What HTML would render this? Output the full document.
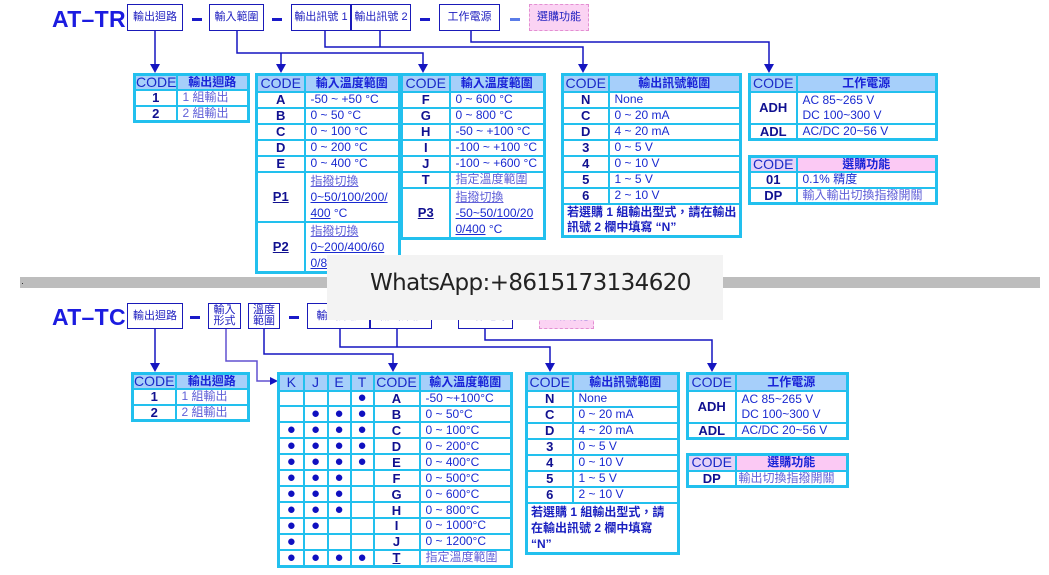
<!DOCTYPE html>
<html><head><meta charset="utf-8">
<style>
*{margin:0;padding:0;box-sizing:border-box}
body{width:1049px;height:575px;background:#fff;position:relative;overflow:hidden;font-family:"Liberation Sans","Noto Sans CJK TC",sans-serif;color:#1a22c8}
.abs{position:absolute}
.title{position:absolute;font-size:23px;font-weight:bold;color:#1c1ce0;letter-spacing:0.3px}
.hb{position:absolute;border:1px solid #1a1ab8;font-size:11px;color:#2020c0;display:flex;align-items:center;justify-content:center;text-align:center;line-height:11px;background:#fff}
.pk{background:#fbd3f3;border:1px dashed #e38fd2}
.dash{position:absolute;height:3px;width:10px;background:#1a1ac8}
table.t{position:absolute;border-collapse:collapse;table-layout:fixed;border:3px solid #22c0ee;background:#fff}
table.t td{border:2px solid #22c0ee;padding:0 0 0 5px;font-size:12px;line-height:13px;color:#1a2ad0;white-space:nowrap;overflow:hidden;vertical-align:middle}
table.t td.c{text-align:center;padding:0;font-size:13px;font-weight:bold;color:#101090}
table.t tr.h td{background:#a6cffa;text-align:center;padding:0;font-weight:bold;font-size:12px;color:#1a24d8}
table.t tr.h td.cd{font-weight:normal;font-size:14px;color:#1a2ac8}
table.t td.p{color:#6060d8}
.u{text-decoration:underline}
table.t td.d{text-align:center;padding:0;font-size:15px;line-height:12px;color:#1010c0}
</style></head><body>

<svg class="abs" style="left:0;top:0" width="1049" height="575">
<g stroke="#1515c0" stroke-width="1.5" fill="none">
<polyline points="155,31 155,66"/>
<polyline points="237,31 237,53 423,53 423,66"/>
<polyline points="281,53 281,66"/>
<polyline points="325,31 325,47 583,47 583,66"/>
<polyline points="380,31 380,47"/>
<polyline points="471,31 471,42 769,42 769,66"/>
<polyline points="155,329 155,365"/>
<polyline points="226,329 226,361 257,361 257,381 272,381" stroke="#6050d0"/>
<polyline points="264,329 264,354 393,354 393,365"/>
<polyline points="340,329 340,347 550,347 550,365"/>
<polyline points="397,329 397,347"/>
<polyline points="485,329 485,340 712,340 712,365"/>
</g>
<g fill="#1515c0">
<polygon points="150,64 160,64 155,73"/>
<polygon points="276,64 286,64 281,73"/>
<polygon points="418,64 428,64 423,73"/>
<polygon points="578,64 588,64 583,73"/>
<polygon points="764,64 774,64 769,73"/>
<polygon points="150,363 160,363 155,372"/>
<polygon points="388,363 398,363 393,372"/>
<polygon points="545,363 555,363 550,372"/>
<polygon points="707,363 717,363 712,372"/>
<polygon points="270,377 270,385 278,381"/>
</g>
</svg>

<div class="title" style="left:52px;top:6px">AT–TR</div>
<div class="hb" style="left:127px;top:4px;width:56px;height:27px">輸出迴路</div>
<div class="dash" style="left:192px;top:18px"></div>
<div class="hb" style="left:209px;top:4px;width:55px;height:27px">輸入範圍</div>
<div class="dash" style="left:272px;top:18px"></div>
<div class="hb" style="left:291px;top:4px;width:60px;height:27px">輸出訊號 1</div>
<div class="hb" style="left:351px;top:4px;width:60px;height:27px">輸出訊號 2</div>
<div class="dash" style="left:420px;top:18px"></div>
<div class="hb" style="left:439px;top:4px;width:61px;height:27px">工作電源</div>
<div class="dash" style="left:510px;top:18px;background:#5a7ce8"></div>
<div class="hb pk" style="left:529px;top:4px;width:60px;height:27px">選購功能</div>

<table class="t" style="left:133px;top:73px;width:117px;height:50px">
<col style="width:42px"><col>
<tr class="h"><td class="cd">CODE</td><td>輸出迴路</td></tr>
<tr><td class="c">1</td><td class="p">1 組輸出</td></tr>
<tr><td class="c">2</td><td class="p">2 組輸出</td></tr>
</table>

<table class="t" style="left:255px;top:73px;width:146px;height:197px">
<col style="width:48px"><col>
<tr class="h" style="height:17px"><td class="cd">CODE</td><td>輸入溫度範圍</td></tr>
<tr style="height:16px"><td class="c">A</td><td>-50 ~ +50 °C</td></tr>
<tr style="height:16px"><td class="c">B</td><td>0 ~ 50 °C</td></tr>
<tr style="height:16px"><td class="c">C</td><td>0 ~ 100 °C</td></tr>
<tr style="height:16px"><td class="c">D</td><td>0 ~ 200 °C</td></tr>
<tr style="height:16px"><td class="c">E</td><td>0 ~ 400 °C</td></tr>
<tr style="height:48px"><td class="c u">P1</td><td class="p" style="line-height:16px"><span class="u">指撥切換 </span><br><span class="u" style="color:#1a2ad0">0~50/100/200/</span><br><span style="color:#1a2ad0"><span class="u">400</span> °C</span></td></tr>
<tr style="height:50px"><td class="c u">P2</td><td class="p" style="line-height:16px"><span class="u">指撥切換 </span><br><span class="u" style="color:#1a2ad0">0~200/400/60</span><br><span class="u" style="color:#1a2ad0">0/800</span></td></tr>
</table>

<table class="t" style="left:400px;top:73px;width:146px;height:164px">
<col style="width:48px"><col>
<tr class="h" style="height:17px"><td class="cd">CODE</td><td>輸入溫度範圍</td></tr>
<tr style="height:16px"><td class="c">F</td><td>0 ~ 600 °C</td></tr>
<tr style="height:16px"><td class="c">G</td><td>0 ~ 800 °C</td></tr>
<tr style="height:16px"><td class="c">H</td><td>-50 ~ +100 °C</td></tr>
<tr style="height:16px"><td class="c">I</td><td>-100 ~ +100 °C</td></tr>
<tr style="height:16px"><td class="c">J</td><td>-100 ~ +600 °C</td></tr>
<tr style="height:16px"><td class="c">T</td><td class="p">指定溫度範圍</td></tr>
<tr style="height:49px"><td class="c u">P3</td><td class="p" style="line-height:16px"><span class="u">指撥切換 </span><br><span class="u" style="color:#1a2ad0">-50~50/100/20</span><br><span style="color:#1a2ad0"><span class="u">0/400</span> °C</span></td></tr>
</table>

<table class="t" style="left:561px;top:73px;width:181px;height:164px">
<col style="width:46px"><col>
<tr class="h" style="height:17px"><td class="cd">CODE</td><td>輸出訊號範圍</td></tr>
<tr style="height:16px"><td class="c">N</td><td>None</td></tr>
<tr style="height:16px"><td class="c">C</td><td>0 ~ 20 mA</td></tr>
<tr style="height:16px"><td class="c">D</td><td>4 ~ 20 mA</td></tr>
<tr style="height:16px"><td class="c">3</td><td>0 ~ 5 V</td></tr>
<tr style="height:16px"><td class="c">4</td><td>0 ~ 10 V</td></tr>
<tr style="height:16px"><td class="c">5</td><td>1 ~ 5 V</td></tr>
<tr style="height:16px"><td class="c">6</td><td>2 ~ 10 V</td></tr>
<tr style="height:32px"><td colspan="2" style="font-weight:bold;font-size:12px;line-height:15px;padding-left:3px;color:#1a20c0">若選購 1 組輸出型式，請在輸出<br>訊號 2 欄中填寫 “N”</td></tr>
</table>

<table class="t" style="left:748px;top:73px;width:190px;height:66px">
<col style="width:47px"><col>
<tr class="h" style="height:17px"><td class="cd">CODE</td><td>工作電源</td></tr>
<tr style="height:32px"><td class="c">ADH</td><td style="line-height:15px">AC 85~265 V<br>DC 100~300 V</td></tr>
<tr style="height:16px"><td class="c">ADL</td><td>AC/DC 20~56 V</td></tr>
</table>

<table class="t" style="left:748px;top:155px;width:190px;height:50px">
<col style="width:47px"><col>
<tr class="h"><td class="cd" style="background:#e4d2f8">CODE</td><td style="background:#fbc9f4">選購功能</td></tr>
<tr><td class="c">01</td><td>0.1% <span class="p">精度</span></td></tr>
<tr><td class="c">DP</td><td class="p">輸入輸出切換指撥開關</td></tr>
</table>

<div class="abs" style="left:20px;top:277px;width:1020px;height:11px;background:#bdbdbd"></div>
<div class="abs" style="left:22px;top:283px;width:1px;height:1px;background:#333"></div>

<div class="title" style="left:52px;top:304px">AT–TC</div>
<div class="hb" style="left:127px;top:303px;width:56px;height:26px">輸出迴路</div>
<div class="dash" style="left:190px;top:316px"></div>
<div class="hb" style="left:208px;top:303px;width:33px;height:26px">輸入<br>形式</div>
<div class="hb" style="left:248px;top:303px;width:32px;height:26px">溫度<br>範圍</div>
<div class="dash" style="left:289px;top:316px"></div>
<div class="hb" style="left:307px;top:303px;width:63px;height:26px">輸出訊號</div>
<div class="hb" style="left:370px;top:303px;width:62px;height:26px">輸出訊號</div>
<div class="dash" style="left:440px;top:316px;background:#c8d0f0"></div>
<div class="hb" style="left:458px;top:303px;width:55px;height:26px">工作電源</div>
<div class="dash" style="left:522px;top:316px;background:#c8d0f0"></div>
<div class="hb pk" style="left:539px;top:303px;width:55px;height:26px">選購功能</div>

<table class="t" style="left:131px;top:372px;width:119px;height:50px">
<col style="width:43px"><col>
<tr class="h"><td class="cd">CODE</td><td>輸出迴路</td></tr>
<tr><td class="c">1</td><td class="p">1 組輸出</td></tr>
<tr><td class="c">2</td><td class="p">2 組輸出</td></tr>
</table>

<table class="t" style="left:277px;top:372px;width:236px;height:196px">
<col style="width:25px"><col style="width:24px"><col style="width:23px"><col style="width:23px"><col style="width:46px"><col>
<tr class="h" style="height:17px"><td class="cd">K</td><td class="cd">J</td><td class="cd">E</td><td class="cd">T</td><td class="cd">CODE</td><td>輸入溫度範圍</td></tr>
<tr><td class="d"></td><td class="d"></td><td class="d"></td><td class="d">●</td><td class="c">A</td><td>-50 ~+100°C</td></tr>
<tr><td class="d"></td><td class="d">●</td><td class="d">●</td><td class="d">●</td><td class="c">B</td><td>0 ~ 50°C</td></tr>
<tr><td class="d">●</td><td class="d">●</td><td class="d">●</td><td class="d">●</td><td class="c">C</td><td>0 ~ 100°C</td></tr>
<tr><td class="d">●</td><td class="d">●</td><td class="d">●</td><td class="d">●</td><td class="c">D</td><td>0 ~ 200°C</td></tr>
<tr><td class="d">●</td><td class="d">●</td><td class="d">●</td><td class="d">●</td><td class="c">E</td><td>0 ~ 400°C</td></tr>
<tr><td class="d">●</td><td class="d">●</td><td class="d">●</td><td class="d"></td><td class="c">F</td><td>0 ~ 500°C</td></tr>
<tr><td class="d">●</td><td class="d">●</td><td class="d">●</td><td class="d"></td><td class="c">G</td><td>0 ~ 600°C</td></tr>
<tr><td class="d">●</td><td class="d">●</td><td class="d">●</td><td class="d"></td><td class="c">H</td><td>0 ~ 800°C</td></tr>
<tr><td class="d">●</td><td class="d">●</td><td class="d"></td><td class="d"></td><td class="c">I</td><td>0 ~ 1000°C</td></tr>
<tr><td class="d">●</td><td class="d"></td><td class="d"></td><td class="d"></td><td class="c">J</td><td>0 ~ 1200°C</td></tr>
<tr><td class="d">●</td><td class="d">●</td><td class="d">●</td><td class="d">●</td><td class="c u">T</td><td class="p">指定溫度範圍</td></tr>
</table>

<table class="t" style="left:525px;top:372px;width:155px;height:180px">
<col style="width:46px"><col>
<tr class="h" style="height:17px"><td class="cd">CODE</td><td>輸出訊號範圍</td></tr>
<tr style="height:16px"><td class="c">N</td><td>None</td></tr>
<tr style="height:16px"><td class="c">C</td><td>0 ~ 20 mA</td></tr>
<tr style="height:16px"><td class="c">D</td><td>4 ~ 20 mA</td></tr>
<tr style="height:16px"><td class="c">3</td><td>0 ~ 5 V</td></tr>
<tr style="height:16px"><td class="c">4</td><td>0 ~ 10 V</td></tr>
<tr style="height:16px"><td class="c">5</td><td>1 ~ 5 V</td></tr>
<tr style="height:16px"><td class="c">6</td><td>2 ~ 10 V</td></tr>
<tr style="height:50px"><td colspan="2" style="font-weight:bold;font-size:12px;line-height:16px;padding-left:3px;color:#1a20c0">若選購 1 組輸出型式，請<br>在輸出訊號 2 欄中填寫<br>“N”</td></tr>
</table>

<table class="t" style="left:686px;top:372px;width:163px;height:66px">
<col style="width:48px"><col>
<tr class="h" style="height:17px"><td class="cd">CODE</td><td>工作電源</td></tr>
<tr style="height:32px"><td class="c">ADH</td><td style="line-height:15px">AC 85~265 V<br>DC 100~300 V</td></tr>
<tr style="height:16px"><td class="c">ADL</td><td>AC/DC 20~56 V</td></tr>
</table>

<table class="t" style="left:686px;top:453px;width:163px;height:35px">
<col style="width:48px"><col>
<tr class="h"><td class="cd" style="background:#e4d2f8">CODE</td><td style="background:#fbc9f4">選購功能</td></tr>
<tr><td class="c">DP</td><td class="p" style="padding-left:2px">輸出切換指撥開關</td></tr>
</table>

<div class="abs" style="left:327px;top:255px;width:396px;height:65px;background:#f3f3f3;font-family:'DejaVu Sans','Liberation Sans',sans-serif;font-size:23px;color:#222;padding:15px 0 0 43px;letter-spacing:-0.6px">WhatsApp:+8615173134620</div>

</body></html>
